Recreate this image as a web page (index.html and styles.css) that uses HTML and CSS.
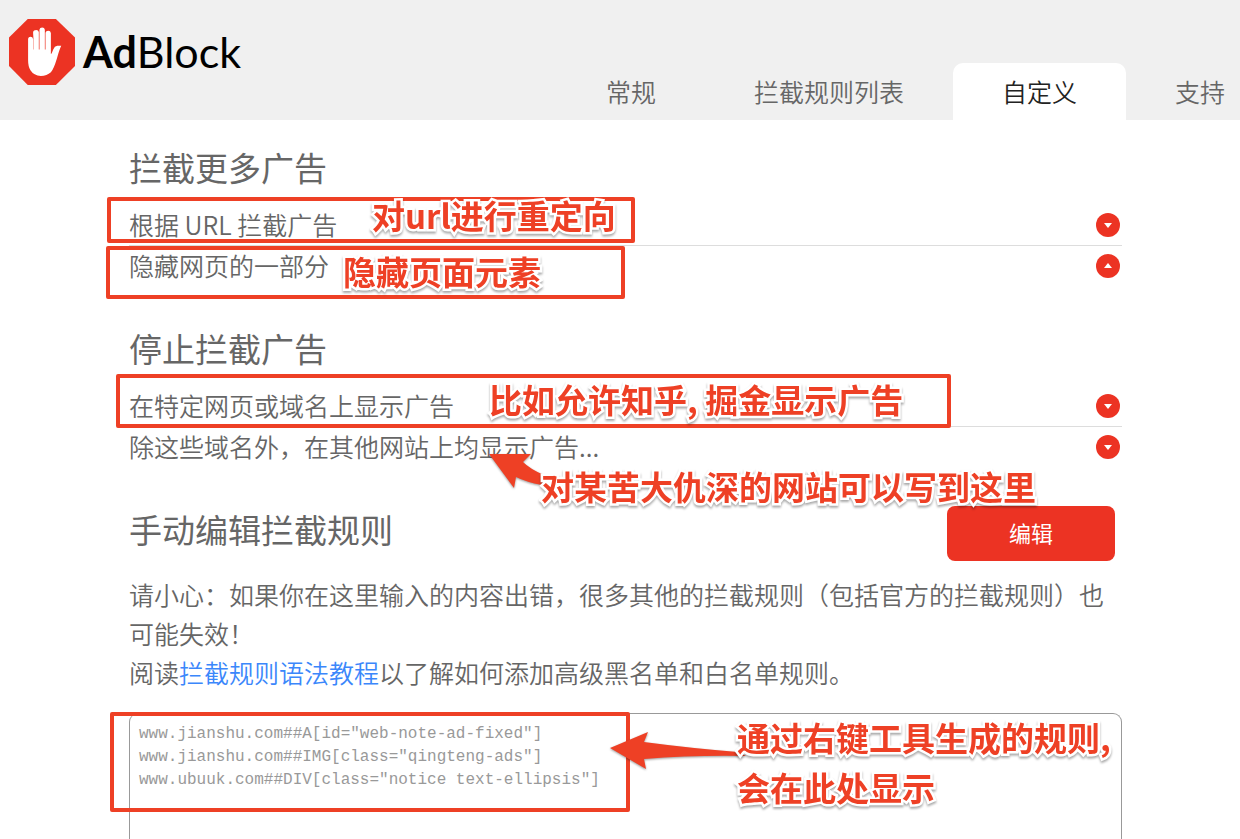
FILE: index.html
```html
<!DOCTYPE html>
<html lang="zh-CN">
<head>
<meta charset="utf-8">
<title>AdBlock - 自定义</title>
<link rel="stylesheet" href="styles.css">
</head>
<body>
<header class="header">
  <a class="brand" href="#home">
    <svg class="brand-mark" viewBox="27 57 197 197" aria-hidden="true">
      <path fill="#ec3323" d="M83 57H167L224 112V197L167 254H83L27 197V112Z"/>
      <path fill="#fff" d="M84 116Q85 110 91 110Q98 110 99 117V95Q100 90 108 90Q115 90 116 96V148H118V88Q119 82 126 82Q133 82 134 89V148H136V98Q137 92 144 92Q151 92 152 99V162Q155 160 159 148Q163 138 171 137L183 137Q177 149 170 175Q160 208 152 216Q140 227 122 227Q101 226 91 210Q84 199 84 180ZM99 117V148H100V100Z"/>
    </svg>
    <span class="brand-name"><b>Ad</b>Block</span>
  </a>
  <nav class="tabs">
    <a class="tab" href="#general">常规</a>
    <a class="tab" href="#filters">拦截规则列表</a>
    <a class="tab tab-active" href="#customize">自定义</a>
    <a class="tab" href="#support">支持</a>
  </nav>
</header>

<main class="content">
  <section class="section">
    <h2 class="title">拦截更多广告</h2>
    <div class="row row-line">
      <span id="by-url">根据 URL 拦截广告</span>
      <button class="toggle" type="button" aria-labelledby="by-url"><svg viewBox="0 0 24 24"><path d="M8 10H16L12 15Z"/></svg></button>
    </div>
    <div class="row">
      <span id="hide-part">隐藏网页的一部分</span>
      <button class="toggle" type="button" aria-labelledby="hide-part"><svg viewBox="0 0 24 24"><path d="M8 14H16L12 9Z"/></svg></button>
    </div>
  </section>

  <section class="section">
    <h2 class="title">停止拦截广告</h2>
    <div class="row row-line">
      <span id="show-on">在特定网页或域名上显示广告</span>
      <button class="toggle" type="button" aria-labelledby="show-on"><svg viewBox="0 0 24 24"><path d="M8 10H16L12 15Z"/></svg></button>
    </div>
    <div class="row">
      <span id="show-except">除这些域名外，在其他网站上均显示广告...</span>
      <button class="toggle" type="button" aria-labelledby="show-except"><svg viewBox="0 0 24 24"><path d="M8 10H16L12 15Z"/></svg></button>
    </div>
  </section>

  <section class="section section-fill">
    <div class="edit-head">
      <h2 class="title" id="manual">手动编辑拦截规则</h2>
      <button class="edit" type="button">编辑</button>
    </div>
    <p class="note">请小心：如果你在这里输入的内容出错，很多其他的拦截规则（包括官方的拦截规则）也可能失效！</p>
    <p class="note">阅读<a class="link" href="#syntax">拦截规则语法教程</a>以了解如何添加高级黑名单和白名单规则。</p>
    <textarea class="rules" aria-labelledby="manual" spellcheck="false" readonly>www.jianshu.com##A[id="web-note-ad-fixed"]
www.jianshu.com##IMG[class="qingteng-ads"]
www.ubuuk.com##DIV[class="notice text-ellipsis"]</textarea>
  </section>
</main>

<div class="marks">
  <div class="frame frame-url"></div>
  <div class="frame frame-hide"></div>
  <div class="frame frame-show"></div>
  <div class="frame frame-rules"></div>
  <svg class="arrow arrow-except" viewBox="0 0 56 36" aria-hidden="true"><path d="M1 1H43L35 9Q42 16 56 22L54 32Q38 29 28 24L26 35Z"/></svg>
  <svg class="arrow arrow-rules" viewBox="0 0 138 40" aria-hidden="true"><path d="M1 18L39 2L35 12Q80 18 129 22L137 26Q85 25 35 29L37 39Z"/></svg>
  <p class="remark remark-url">对url进行重定向</p>
  <p class="remark remark-hide">隐藏页面元素</p>
  <p class="remark remark-show">比如允许知乎, 掘金显示广告</p>
  <p class="remark remark-except">对某苦大仇深的网站可以写到这里</p>
  <p class="remark remark-rules">通过右键工具生成的规则,<br>会在此处显示</p>
</div>
</body>
</html>
```

FILE: styles.css
```css
* {
  box-sizing: border-box;
}

body {
  position: relative;
  display: flex;
  flex-direction: column;
  min-height: 100vh;
  margin: 0;
  overflow-x: hidden;
  background: #fff;
  color: #666;
  font-family: "Noto Sans CJK SC", sans-serif;
  font-size: 25px;
  font-weight: 350;
}

h2, p {
  margin: 0;
}

.header {
  display: flex;
  justify-content: space-between;
  height: 120px;
  background: #f0f0f0;
}

.brand {
  display: flex;
  align-items: center;
  gap: 8px;
  height: 104px;
  padding-left: 9px;
  color: #000;
  text-decoration: none;
}

.brand-mark {
  width: 66px;
  height: 66px;
}

.brand-name {
  font-family: Lato, sans-serif;
  font-size: 43px;
  font-weight: 400;
  line-height: 48px;
}

.brand-name b {
  font-weight: 700;
}

.tabs {
  display: flex;
  align-items: flex-end;
  flex: none;
  margin-right: -34px;
}

.tab {
  height: 57px;
  padding: 0 49px;
  border-radius: 10px 10px 0 0;
  color: #666;
  line-height: 56px;
  text-decoration: none;
}

.tab-active {
  background: #fff;
  color: #222;
}

.content {
  display: flex;
  flex: 1;
  flex-direction: column;
  padding: 23px 118px 0 129px;
}

.section {
  margin-bottom: 38px;
}

.section-fill {
  display: flex;
  flex: 1;
  flex-direction: column;
  margin-bottom: 0;
}

.title {
  margin-bottom: 14px;
  font-size: 33px;
  font-weight: 400;
  line-height: 48px;
}

.row {
  display: flex;
  align-items: center;
  justify-content: space-between;
  height: 40px;
  padding-right: 2px;
  line-height: 38px;
}

.row-line {
  height: 41px;
  border-bottom: 1px solid #ddd;
}

.row span {
  height: 40px;
}

.toggle {
  width: 24px;
  height: 24px;
  padding: 0;
  border: 0;
  border-radius: 50%;
  background: #ec3323;
}

.toggle svg {
  display: block;
  fill: #fff;
}

.edit-head {
  display: flex;
  align-items: center;
  justify-content: space-between;
  margin-bottom: 14px;
  padding-right: 7px;
}

.edit-head .title {
  margin-bottom: 8px;
}

.edit {
  width: 168px;
  height: 55px;
  padding: 0 0 2px;
  border: 0;
  border-radius: 8px;
  background: #ec3323;
  color: #fff;
  font-family: inherit;
  font-size: 22px;
  font-weight: 400;
}

.note {
  line-height: 39px;
}

.link {
  color: #3b87fb;
  text-decoration: none;
}

.rules {
  display: block;
  flex: 1;
  width: 100%;
  min-height: 120px;
  margin-top: 21px;
  padding: 9px 9px 0;
  border: 1px solid #999;
  border-bottom: 0;
  border-radius: 9px 9px 0 0;
  outline: 0;
  background: #fff;
  color: #999;
  font-family: "Liberation Mono", monospace;
  font-size: 16px;
  line-height: 23px;
  resize: none;
}

/* Annotations drawn over the page */
.marks {
  position: absolute;
  inset: 0;
  pointer-events: none;
}

.frame {
  position: absolute;
  border: 4px solid #ee4025;
  border-radius: 2px;
}

.frame-url {
  left: 107px;
  top: 197px;
  width: 528px;
  height: 46px;
}

.frame-hide {
  left: 106px;
  top: 246px;
  width: 519px;
  height: 53px;
}

.frame-show {
  left: 116px;
  top: 374px;
  width: 835px;
  height: 54px;
}

.frame-rules {
  left: 110px;
  top: 712px;
  width: 520px;
  height: 100px;
}

.arrow {
  position: absolute;
  fill: #ee4025;
  filter: drop-shadow(0 1px 1px #0006);
}

.arrow-except {
  left: 488px;
  top: 453px;
  width: 56px;
  height: 36px;
}

.arrow-rules {
  left: 609px;
  top: 730px;
  width: 138px;
  height: 40px;
}

.remark {
  position: absolute;
  color: #ee4025;
  font-size: 33px;
  font-weight: 700;
  line-height: 50px;
  white-space: nowrap;
  -webkit-text-stroke: 5px #fff;
  paint-order: stroke fill;
  filter: drop-shadow(0 2px 1px #0005);
}

.remark-url {
  left: 372px;
  top: 190px;
}

.remark-hide {
  left: 343px;
  top: 246px;
}

.remark-show {
  left: 489px;
  top: 374px;
}

.remark-except {
  left: 541px;
  top: 461px;
}

.remark-rules {
  left: 737px;
  top: 712px;
}
```
